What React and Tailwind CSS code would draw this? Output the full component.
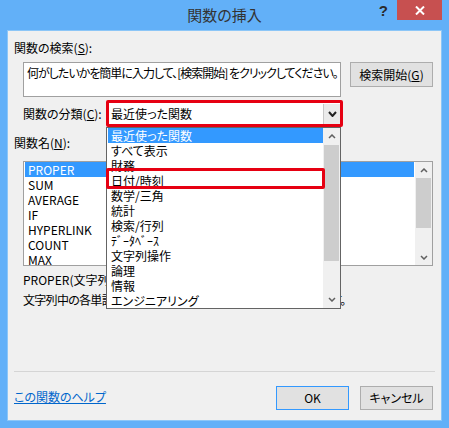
import React from "react";

/* ================= DATA ================= */

const categories = [
  "最近使った関数",
  "すべて表示",
  "財務",
  "日付/時刻",
  "数学/三角",
  "統計",
  "検索/行列",
  "ﾃﾞｰﾀﾍﾞｰｽ",
  "文字列操作",
  "論理",
  "情報",
  "エンジニアリング",
];

const functionNames = ["PROPER", "SUM", "AVERAGE", "IF", "HYPERLINK", "COUNT", "MAX"];

/* ================= SMALL PARTS ================= */

function Chevron({ up = false, color = "#606060", w = 8, h = 5, stroke = 1.5 }) {
  const pts = up
    ? `1,${h - 1} ${w / 2},1 ${w - 1},${h - 1}`
    : `1,1 ${w / 2},${h - 1} ${w - 1},1`;
  return (
    <svg width={w} height={h} viewBox={`0 0 ${w} ${h}`}>
      <polyline points={pts} fill="none" stroke={color} strokeWidth={stroke} />
    </svg>
  );
}

function Scrollbar({ arrow, thumb }) {
  return (
    <div className="w-[17px] flex flex-col bg-[#f0f0f0]">
      <div className={`${arrow} flex items-center justify-center`}>
        <Chevron up />
      </div>
      <div className={`${thumb} mx-[1px] bg-[#cdcdcd]`} />
      <div className="flex-1" />
      <div className={`${arrow} flex items-center justify-center`}>
        <Chevron />
      </div>
    </div>
  );
}

/* ================= COMPONENT ================= */

export default function App() {
  return (
    <div className="w-[449px] h-[428px] bg-[#62b0f8] px-[8px] font-['Noto_Sans_CJK_JP','Noto_Sans',sans-serif] [font-feature-settings:'palt'] text-black">
      {/* title bar */}
      <div className="h-[31px] grid grid-cols-[1fr_auto_1fr]">
        <div />
        <div className="self-center text-[15px] text-[#333]">関数の挿入</div>
        <div className="flex justify-end items-start -mr-[1px]">
          <span className="mt-[3px] mr-[9px] text-[15px] font-bold leading-[16px] text-[#2b2b2b] font-['Liberation_Sans',sans-serif]">
            ?
          </span>
          <button className="w-[45px] h-[20px] bg-[#c75050] flex items-center justify-center">
            <svg width="10" height="9" viewBox="0 0 10 9">
              <path d="M1 0.5 L9 8.5 M9 0.5 L1 8.5" stroke="white" strokeWidth="2" />
            </svg>
          </button>
        </div>
      </div>

      {/* client area */}
      <div className="relative w-[433px] h-[389px] bg-[#f0f0f0] flex flex-col text-[12px] leading-[16px] shadow-[0_0_0_1px_#8cc6f7]">
        <div className="mt-[9px] ml-[6px]">
          関数の検索(<span className="underline">S</span>):
        </div>

        <div className="mt-[6px] ml-[15px] flex items-start gap-[9px]">
          <div className="w-[318px] h-[35px] border border-[#a0a0a0] bg-white pl-[3px] pt-[2px] whitespace-nowrap overflow-hidden tracking-[-1px]">
            何がしたいかを簡単に入力して、[検索開始] をクリックしてください。
          </div>
          <button className="w-[83px] h-[25px] border border-[#adadad] bg-[#e1e1e1]">
            検索開始(<span className="underline">G</span>)
          </button>
        </div>

        <div className="mt-[3px] ml-[15px] flex items-center">
          <div className="w-[83px]">
            関数の分類(<span className="underline">C</span>):
          </div>
          <div className="relative z-20 w-[237px] h-[27px] border-[3px] border-[#e60012] rounded-[2px] bg-white flex items-center">
            <span className="flex-1 pl-[2px]">最近使った関数</span>
            <div className="w-[17px] h-[20px] bg-[#ebebeb] border-l border-[#c8c8c8] flex items-center justify-center">
              <Chevron color="#222" w={9} h={6} stroke={2} />
            </div>
          </div>
        </div>

        <div className="mt-[8px] ml-[6px]">
          関数名(<span className="underline">N</span>):
        </div>

        <div className="mt-[10px] ml-[15px] w-[410px] h-[105px] border border-[#a0a0a0] bg-white flex">
          <div className="flex-1 pl-[1px]">
            {functionNames.map((name, i) => (
              <div
                key={name}
                className={`h-[15px] leading-[15px] pl-[3px] ${
                  i === 0 ? "bg-[#3399ff] text-white" : ""
                }`}
              >
                {name}
              </div>
            ))}
          </div>
          <div className="w-px" />
          <Scrollbar arrow="h-[16px]" thumb="h-[50px]" />
        </div>

        <div className="mt-[6px] ml-[15px]">PROPER(文字列)</div>
        <div className="mt-[4px] ml-[15px] whitespace-nowrap tracking-[-0.7px]">
          文字列中の各単語の先頭文字を大文字に変換した結果を返します。
        </div>

        <div className="mt-[63px] ml-[6px] w-[421px] h-px bg-[#d5d5d5]" />

        <div className="mt-[14px] pl-[6px] pr-[8px] flex items-center">
          <a className="text-[#0066cc] underline -mt-[3px]">この関数のヘルプ</a>
          <div className="ml-auto flex gap-[11px]">
            <button className="w-[73px] h-[24px] border border-[#3399ff] bg-[#e1e1e1]">OK</button>
            <button className="w-[73px] h-[24px] border border-[#adadad] bg-[#e1e1e1]">キャンセル</button>
          </div>
        </div>

        {/* open dropdown list */}
        <div className="absolute z-10 left-[98px] top-[96px] w-[235px] border border-[#646464] bg-white flex">
          <div className="flex-1">
            {categories.map((c, i) => (
              <div
                key={c}
                className={`h-[15px] leading-[15px] ml-[1px] pl-[3px] ${
                  i === 0 ? "bg-[#3399ff] text-white" : ""
                }`}
              >
                {c}
              </div>
            ))}
          </div>
          <Scrollbar arrow="h-[17px]" thumb="h-[116px]" />
        </div>

        {/* annotation box around 日付/時刻 */}
        <div className="absolute z-20 left-[98px] top-[137px] w-[219px] h-[21px] border-[3px] border-[#e60012] rounded-[2px]" />
      </div>
    </div>
  );
}
